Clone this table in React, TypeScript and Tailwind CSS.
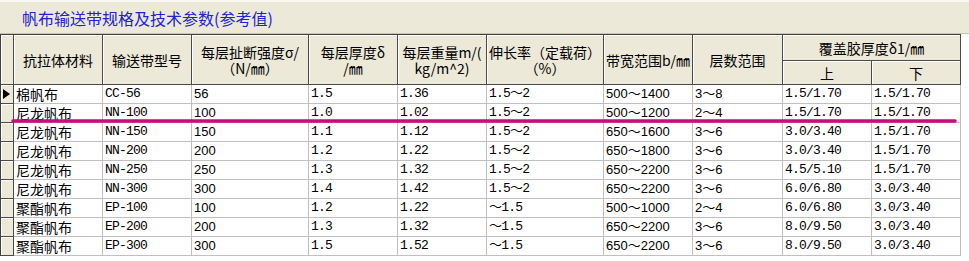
import React from "react";

const cjk = "font-['Noto_Sans_CJK_SC',sans-serif]";
const mono = "font-['Liberation_Mono','Noto_Sans_CJK_SC',monospace] text-[13px] tracking-[-0.8px]";
const sans = "font-['Liberation_Sans','Noto_Sans_CJK_SC',sans-serif] text-[13px]";

type Kind = "cjk" | "mono" | "sans";
const kinds: Kind[] = ["cjk", "mono", "sans", "mono", "mono", "mono", "sans", "sans", "mono", "mono"];

const rows: string[][] = [
  ["棉帆布", "CC-56", "56", "1.5", "1.36", "1.5～2", "500～1400", "3～8", "1.5/1.70", "1.5/1.70"],
  ["尼龙帆布", "NN-100", "100", "1.0", "1.02", "1.5～2", "500～1200", "2～4", "1.5/1.70", "1.5/1.70"],
  ["尼龙帆布", "NN-150", "150", "1.1", "1.12", "1.5～2", "650～1600", "3～6", "3.0/3.40", "1.5/1.70"],
  ["尼龙帆布", "NN-200", "200", "1.2", "1.22", "1.5～2", "650～1800", "3～6", "3.0/3.40", "1.5/1.70"],
  ["尼龙帆布", "NN-250", "250", "1.3", "1.32", "1.5～2", "650～2200", "3～6", "4.5/5.10", "1.5/1.70"],
  ["尼龙帆布", "NN-300", "300", "1.4", "1.42", "1.5～2", "650～2200", "3～6", "6.0/6.80", "3.0/3.40"],
  ["聚酯帆布", "EP-100", "100", "1.2", "1.22", "～1.5", "500～1000", "2～4", "6.0/6.80", "3.0/3.40"],
  ["聚酯帆布", "EP-200", "200", "1.3", "1.32", "～1.5", "650～2200", "3～6", "8.0/9.50", "3.0/3.40"],
  ["聚酯帆布", "EP-300", "300", "1.5", "1.52", "～1.5", "650～2200", "3～6", "8.0/9.50", "3.0/3.40"],
];

const hdr =
  "bg-[#ece9d8] border-r border-b border-[#4a4a4a] shadow-[inset_1px_1px_0_#ffffff] flex flex-col items-center justify-center text-center text-[14px] leading-[16px] text-black whitespace-nowrap overflow-hidden " +
  cjk;

const kindClass = (k: Kind) =>
  k === "cjk" ? `${cjk} text-[14px]` : k === "mono" ? mono : sans;

export default function App() {
  return (
    <div className="relative w-[969px] h-[261px] overflow-hidden bg-white">
      {/* title bar */}
      <div className="h-[34px] bg-[#ece9d8] border-t-2 border-[#f8f7f2] border-b border-b-[#c9c6b8] flex items-center pl-[22px]">
        <span className={`${cjk} text-[16px] text-[#2222cc] leading-none`}>
          帆布输送带规格及技术参数(参考值)
        </span>
      </div>

      {/* grid */}
      <div className="border-t border-l border-[#404040] w-[961px]">
        <div className="grid grid-cols-[13px_89px_89px_117px_89px_89px_117px_89px_90px_89px_89px] grid-rows-[26px_24px_repeat(9,19px)]">
          {/* header */}
          <div className={`${hdr} row-span-2`} />
          <div className={`${hdr} row-span-2`}>抗拉体材料</div>
          <div className={`${hdr} row-span-2`}>输送带型号</div>
          <div className={`${hdr} row-span-2`}>
            <span>每层扯断强度σ/</span>
            <span>（N/㎜）</span>
          </div>
          <div className={`${hdr} row-span-2`}>
            <span>每层厚度δ</span>
            <span>/㎜</span>
          </div>
          <div className={`${hdr} row-span-2`}>
            <span>每层重量m/(</span>
            <span>kg/m^2)</span>
          </div>
          <div className={`${hdr} row-span-2`}>
            <span>伸长率（定载荷）</span>
            <span>（%）</span>
          </div>
          <div className={`${hdr} row-span-2`}>带宽范围b/㎜</div>
          <div className={`${hdr} row-span-2`}>层数范围</div>
          <div className={`${hdr} col-span-2`}>覆盖胶厚度δ1/㎜</div>
          <div className={hdr}>上</div>
          <div className={hdr}>下</div>

          {/* data rows */}
          {rows.map((r, i) => (
            <React.Fragment key={i}>
              <div className="bg-[#ece9d8] border-r border-b border-[#4a4a4a] shadow-[inset_1px_1px_0_#ffffff] flex items-center justify-start pl-[2px]">
                {i === 0 && (
                  <svg width="7" height="10" viewBox="0 0 7 10">
                    <polygon points="0,0 7,5 0,10" fill="#000" />
                  </svg>
                )}
              </div>
              {r.map((c, j) => (
                <div
                  key={j}
                  className={`bg-white border-r border-b border-[#c0c0c0] flex items-center pl-[2px] leading-[18px] text-black whitespace-nowrap overflow-hidden ${kindClass(
                    kinds[j]
                  )}`}
                >
                  {c}
                </div>
              ))}
            </React.Fragment>
          ))}
        </div>
      </div>

      {/* magenta annotation line */}
      <svg
        className="absolute left-0 top-0 pointer-events-none"
        width="969"
        height="261"
        viewBox="0 0 969 261"
      >
        <line x1="13" y1="121" x2="955" y2="121" stroke="#cc0a78" strokeWidth="3.5" strokeLinecap="round" />
      </svg>
    </div>
  );
}
